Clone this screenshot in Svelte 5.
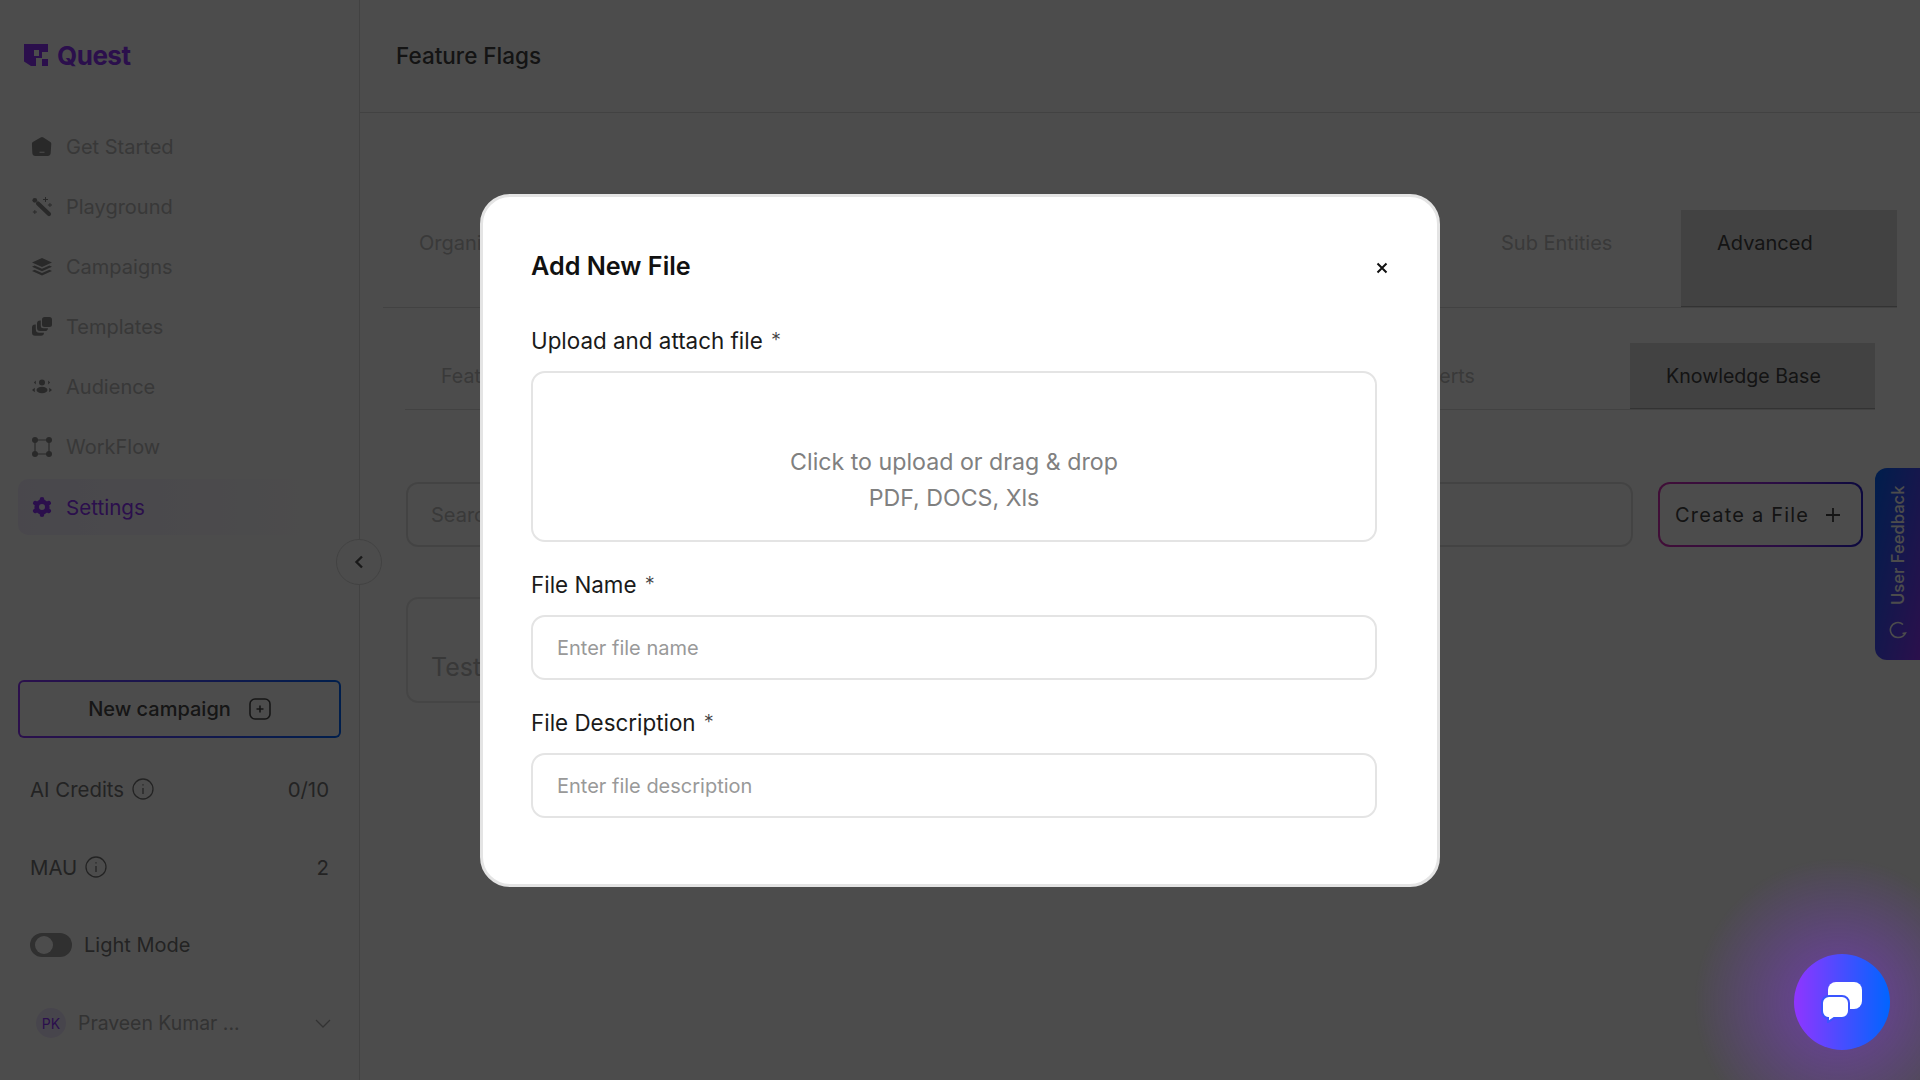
<script>
	// sidebar entries, icon is picked by name in the markup
	const navItems = [
		{ label: 'Get Started', icon: 'start' },
		{ label: 'Playground', icon: 'wand' },
		{ label: 'Campaigns', icon: 'layers' },
		{ label: 'Templates', icon: 'copies' },
		{ label: 'Audience', icon: 'people' },
		{ label: 'WorkFlow', icon: 'flow' },
		{ label: 'Settings', icon: 'gear', active: true }
	];
	const stats = [
		{ label: 'AI Credits', value: '0/10' },
		{ label: 'MAU', value: '2' }
	];
	const lobes = [0, 60, 120, 180, 240, 300];
</script>

<div class="page">
	<aside class="sidebar">
		<div class="logo">
			<svg width="24" height="22" viewBox="0 0 24 22" fill="#9035ff">
				<path d="M0 0H24V8H18V14H12V22H7L0 17.5Z M10 6V12H15V6Z" fill-rule="evenodd" />
				<rect x="18" y="15" width="6" height="7" />
			</svg>
			<span>Quest</span>
		</div>

		<nav class="nav">
			{#each navItems as item}
				<div class="nav-item" class:active={item.active}>
					<svg class="nav-icon" width="20" height="20" viewBox="0 0 20 20" fill="currentColor">
						{#if item.icon === 'start'}
							<path d="M8.6 0.5a2.4 2.4 0 0 1 2.8 0l7 4.6a2 2 0 0 1 .9 1.6l-.6 9.3c-.1 1.7-1.3 3-3 3H3.3c-1.7 0-2.9-1.3-3-3L-.1 6.700a2 2 0 0 1 .9-1.6Z M7.500 14.800v1h5v-1Z" fill-rule="evenodd" />
						{:else if item.icon === 'wand'}
							<path d="M6 6.500 17 17" stroke="currentColor" stroke-width="4.200" stroke-linecap="round" />
							<circle cx="2.800" cy="3.300" r="2.400" />
							<path d="M13 0h1v2h2v1h-2v2h-1V3h-2V2h2Z M17.500 6h.9v1.600h1.600v.9h-1.600v1.600h-.9V8.500h-1.600v-.9h1.600Z M2.400 13h.9v1.600h1.600v.9H3.300v1.600h-.9v-1.600H.8v-.9h1.600Z" />
						{:else if item.icon === 'layers'}
							<path d="M10 1 20 5.500 10 10 0 5.500Z" />
							<path d="M2.600 8.500 10 11.800l7.400-3.300L20 9.700 10 14.200 0 9.700Z" />
							<path d="M2.600 12.700 10 16l7.400-3.300L20 13.900 10 18.500 0 13.900Z" />
						{:else if item.icon === 'copies'}
							<rect x="10" y="0" width="10" height="10" rx="2.500" />
							<path d="M8 3.500h.8v5.200a2.500 2.500 0 0 0 2.500 2.500H16a3 3 0 0 1-3 2.800H8a3 3 0 0 1-3-3V6.500a3 3 0 0 1 3-3Z" />
							<path d="M3 7.500h.8v4.700A3.500 3.500 0 0 0 7.300 15.700H12a3 3 0 0 1-3 3H3a3 3 0 0 1-3-3v-5.200a3 3 0 0 1 3-3Z" />
						{:else if item.icon === 'people'}
							<circle cx="10" cy="5.500" r="3" />
							<ellipse cx="10" cy="13" rx="5.500" ry="3.200" />
							<path d="M3.800 3.400 1.900 5.500l1.900 2.100Z M16.200 3.400l1.900 2.100-1.900 2.100Z M2.800 10.800 0 13l2.800 2.200Z M17.200 10.800 20 13l-2.800 2.200Z" />
						{:else if item.icon === 'flow'}
							<path d="M3 3H17V17H3Z" fill="none" stroke="currentColor" stroke-width="1.200" />
							<circle cx="3" cy="3" r="3" />
							<circle cx="17" cy="3" r="3" />
							<circle cx="3" cy="17" r="3" />
							<circle cx="17" cy="17" r="3" />
						{:else}
							<circle cx="10" cy="10" r="5.300" fill="none" stroke="currentColor" stroke-width="4.600" />
							{#each lobes as deg}
								<circle cx="10" cy="2.200" r="2.300" transform="rotate({deg} 10 10)" />
							{/each}
						{/if}
					</svg>
					<span>{item.label}</span>
				</div>
			{/each}
		</nav>

		<div class="bottom">
			<button class="new-campaign" type="button">
				<span>New campaign</span>
				<svg width="22" height="22" viewBox="0 0 22 22" fill="none" stroke="currentColor" stroke-width="1.600">
					<rect x="1" y="1" width="20" height="20" rx="5" />
					<path d="M11 7.500v7M7.500 11h7" />
				</svg>
			</button>

			{#each stats as stat}
				<div class="stat">
					<span>{stat.label}</span>
					<svg class="info" width="22" height="22" viewBox="0 0 22 22" fill="none" stroke="currentColor" stroke-width="1.300">
						<circle cx="11" cy="11" r="10" />
						<path d="M11 10v6M11 6.200v1.400" />
					</svg>
					<span class="value">{stat.value}</span>
				</div>
			{/each}

			<div class="stat">
				<span class="toggle"><span class="knob"></span></span>
				<span class="mode">Light Mode</span>
			</div>

			<div class="user">
				<span class="avatar">PK</span>
				<span class="user-name">Praveen Kumar ...</span>
				<svg width="16" height="9" viewBox="0 0 16 9" fill="none" stroke="currentColor" stroke-width="1.300">
					<path d="M1 1l7 7 7-7" />
				</svg>
			</div>
		</div>

		<button class="collapse" type="button" aria-label="Collapse">
			<svg width="10" height="14" viewBox="0 0 10 14" fill="none" stroke="#555" stroke-width="2.400">
				<path d="M8 1.500 2.500 7 8 12.500" />
			</svg>
		</button>
	</aside>

	<main class="main">
		<header class="header">Feature Flags</header>

		<div class="tabs">
			<div class="tab">Organization</div>
			<div class="tab-gap"></div>
			<div class="tab">Sub Entities</div>
			<div class="tab current">Advanced</div>
		</div>

		<div class="subtabs">
			<div class="subtab">Feature Flags</div>
			<div class="tab-gap"></div>
			<div class="subtab">Alerts</div>
			<div class="subtab current">Knowledge Base</div>
		</div>

		<div class="toolbar">
			<div class="search">Search</div>
			<button class="create" type="button">
				<span>Create a File</span>
				<svg width="16" height="16" viewBox="0 0 16 16" fill="none" stroke="currentColor" stroke-width="1.800">
					<path d="M8 1v14M1 8h14" />
				</svg>
			</button>
		</div>

		<div class="file-card">Test</div>
	</main>
</div>

<div class="feedback">
	<svg class="feedback-icon" width="18" height="18" viewBox="0 0 18 18" fill="none" stroke="currentColor" stroke-width="1.600">
		<path d="M14 3.500a7.500 7.500 0 1 0-5 13c2.500 0 6-1 7.500-4.500l-3 .5" />
	</svg>
	<span>User Feedback</span>
</div>

<div class="backdrop">
	<section class="modal">
		<div class="modal-head">
			<h2>Add New File</h2>
			<svg class="close" width="12" height="12" viewBox="0 0 12 12" fill="none" stroke="#111" stroke-width="2">
				<path d="M1.500 1.500l9 9M10.500 1.500l-9 9" />
			</svg>
		</div>

		<div class="field-label upload-label">Upload and attach file <span class="star">*</span></div>
		<div class="dropzone">
			<span>Click to upload or drag &amp; drop</span>
			<span>PDF, DOCS, Xls</span>
		</div>

		<div class="field-label">File Name <span class="star">*</span></div>
		<input class="text-input" type="text" placeholder="Enter file name" />

		<div class="field-label">File Description <span class="star">*</span></div>
		<input class="text-input" type="text" placeholder="Enter file description" />
	</section>
</div>

<div class="chat-glow"></div>
<button class="chat" type="button" aria-label="Open chat">
	<svg width="42" height="42" viewBox="0 0 42 42" fill="#fff">
		<rect x="7" y="1" width="34" height="27" rx="8" />
		<path d="M8 15h13a7 7 0 0 1 7 7v8a7 7 0 0 1-7 7H13l-6 4v-4a6 7 0 0 1-6-7v-8a7 7 0 0 1 7-7Z" stroke="#3a55ff" stroke-width="2" />
	</svg>
</button>

<style>
	:global(body) {
		margin: 0;
		background: #fff;
	}

	.page {
		display: flex;
		width: 1920px;
		height: 1080px;
		overflow: hidden;
		font-family: 'Inter', 'Noto Sans', sans-serif;
		color: #444;
	}

	.sidebar {
		position: relative;
		box-sizing: border-box;
		flex: 0 0 360px;
		display: flex;
		flex-direction: column;
		border-right: 1px solid #dcdcdc;
		padding: 43px 18px 18px;
	}

	.logo {
		display: flex;
		align-items: center;
		gap: 9px;
		height: 24px;
		margin-left: 6px;
		color: #9035ff;
		font-size: 26px;
		font-weight: 700;
		letter-spacing: -0.5px;
	}

	.nav {
		display: flex;
		flex-direction: column;
		gap: 4px;
		margin-top: 52px;
	}

	.nav-item {
		display: flex;
		align-items: center;
		gap: 14px;
		height: 56px;
		padding-left: 14px;
		border-radius: 10px;
		color: #bcbcbc;
		font-size: 20px;
	}

	.nav-icon {
		color: #8a8a8a;
		overflow: visible;
	}

	.nav-item.active {
		color: #9035ff;
		font-size: 20.600px;
		background: linear-gradient(90deg, #f4effd, #fff);
	}

	.nav-item.active .nav-icon {
		color: #9035ff;
	}

	.bottom {
		margin-top: auto;
	}

	.new-campaign {
		display: flex;
		align-items: center;
		justify-content: center;
		gap: 18px;
		box-sizing: border-box;
		width: 323px;
		height: 58px;
		margin-bottom: 12px;
		border: 2px solid transparent;
		border-radius: 6px;
		background:
			linear-gradient(#fff, #fff) padding-box,
			linear-gradient(90deg, #9035ff, #0065ff) border-box;
		color: #4a4a4a;
		font-family: inherit;
		font-size: 20px;
		font-weight: 500;
	}

	.stat {
		display: flex;
		align-items: center;
		gap: 8px;
		height: 78px;
		padding: 0 12px;
		color: #777;
		font-size: 20.400px;
	}

	.value {
		margin-left: auto;
	}

	.toggle {
		display: flex;
		align-items: center;
		box-sizing: border-box;
		width: 42px;
		height: 24px;
		margin-right: 4px;
		padding-left: 5px;
		border-radius: 12px;
		background: #a0a0a0;
	}

	.knob {
		width: 18px;
		height: 18px;
		border-radius: 50%;
		background: #fff;
	}

	.mode {
		color: #777;
		font-size: 20px;
	}

	.user {
		display: flex;
		align-items: center;
		height: 78px;
		padding: 0 10px 0 18px;
		color: #aaa;
		font-size: 19.400px;
	}

	.avatar {
		display: flex;
		align-items: center;
		justify-content: center;
		width: 30px;
		height: 30px;
		border-radius: 50%;
		background: #efe6ff;
		color: #9035ff;
		font-size: 14px;
	}

	.user-name {
		margin-left: 12px;
		margin-right: auto;
	}

	.collapse {
		position: absolute;
		top: 539px;
		right: -23px;
		display: flex;
		align-items: center;
		justify-content: center;
		width: 46px;
		height: 46px;
		border: 1px solid #dcdcdc;
		border-radius: 50%;
		background: #fff;
	}

	.main {
		flex: 1;
		display: flex;
		flex-direction: column;
		min-width: 0;
	}

	.header {
		box-sizing: border-box;
		height: 113px;
		padding: 0 36px 2px;
		display: flex;
		align-items: center;
		border-bottom: 1px solid #dcdcdc;
		font-size: 22.500px;
		font-weight: 500;
	}

	.tabs {
		display: flex;
		height: 97px;
		margin: 97px 23px 0;
		border-bottom: 1px solid #dcdcdc;
		font-size: 20px;
		color: #c0c0c0;
	}

	.tab {
		box-sizing: border-box;
		width: 216px;
		padding: 21px 36px;
	}

	.tab-gap {
		flex: 1;
	}

	.tab.current {
		background: #dcdcdc;
		color: #444;
		border-bottom: 1px solid #aaa;
	}

	.subtabs {
		display: flex;
		height: 66px;
		margin: 35px 45px 0;
		border-bottom: 1px solid #dcdcdc;
		font-size: 19.600px;
		color: #c0c0c0;
	}

	.subtab {
		display: flex;
		align-items: center;
		box-sizing: border-box;
		width: 245px;
		padding: 0 36px;
		white-space: nowrap;
	}

	.subtab.current {
		background: #dcdcdc;
		color: #444;
		border-bottom: 1px solid #aaa;
	}

	.toolbar {
		display: flex;
		gap: 25px;
		height: 65px;
		margin: 72px 57px 0 46px;
	}

	.search {
		flex: 1;
		display: flex;
		align-items: center;
		padding-left: 23px;
		border: 2px solid #e2e2e2;
		border-radius: 12px;
		color: #c0c0c0;
		font-size: 20px;
	}

	.create {
		display: flex;
		align-items: center;
		justify-content: flex-start;
		gap: 16px;
		box-sizing: border-box;
		width: 205px;
		padding-left: 15px;
		border: 2px solid transparent;
		border-radius: 12px;
		background:
			linear-gradient(#fff, #fff) padding-box,
			linear-gradient(90deg, #d92fb8, #8a2be2 60%, #2a1fd0) border-box;
		color: #444;
		font-family: inherit;
		font-size: 20px;
		letter-spacing: 1.2px;
	}

	.file-card {
		display: flex;
		align-items: center;
		box-sizing: border-box;
		width: 900px;
		height: 106px;
		margin: 50px 0 0 46px;
		padding: 34px 0 0 23px;
		border: 2px solid #e8e8e8;
		border-radius: 12px;
		color: #bbb;
		font-size: 25px;
	}

	.feedback {
		position: fixed;
		top: 468px;
		right: 0;
		display: flex;
		align-items: center;
		gap: 16px;
		box-sizing: border-box;
		width: 192px;
		height: 45px;
		padding-left: 21px;
		border-radius: 12px 12px 0 0;
		transform-origin: top right;
		transform: translateX(-45px) rotate(-90deg);
		background: linear-gradient(to top right, #9035ff, #0065ff);
		color: #fff;
		font-family: 'Inter', 'Noto Sans', sans-serif;
		font-size: 16.600px;
		font-weight: 500;
		white-space: nowrap;
	}

	.feedback-icon {
		transform: rotate(90deg);
	}

	.backdrop {
		position: fixed;
		inset: 0;
		display: flex;
		align-items: center;
		justify-content: center;
		background: rgba(0, 0, 0, 0.7);
		font-family: 'Inter', 'Noto Sans', sans-serif;
	}

	.modal {
		box-sizing: border-box;
		width: 960px;
		height: 693px;
		margin-top: 1px;
		padding: 51px 48px 0;
		border: 3px solid #e4e4e4;
		border-radius: 30px;
		background: #fff;
		color: #1a1a1a;
	}

	.modal-head {
		display: flex;
		align-items: center;
		justify-content: space-between;
		height: 36px;
		padding-right: 1px;
	}

	.modal-head h2 {
		margin: 0;
		font-size: 25.200px;
		font-weight: 600;
		color: #111;
	}

	.close {
		margin-top: 4px;
	}

	.field-label {
		display: flex;
		align-items: center;
		height: 30px;
		margin: 27px 0 16px;
		font-size: 22.400px;
		white-space: pre;
	}

	.upload-label {
		margin-top: 41px;
	}

	.star {
		margin-left: 2px;
		font-size: 20px;
		font-weight: 300;
		color: #444;
	}

	.dropzone {
		display: flex;
		flex-direction: column;
		align-items: center;
		box-sizing: border-box;
		width: 846px;
		height: 171px;
		padding-top: 71px;
		border: 2px solid #e4e4e4;
		border-radius: 14px;
		color: #808080;
		font-size: 23.200px;
		line-height: 36px;
	}

	.text-input {
		display: block;
		box-sizing: border-box;
		width: 846px;
		height: 65px;
		padding: 0 24px;
		border: 2px solid #e4e4e4;
		border-radius: 14px;
		font-family: inherit;
		font-size: 20px;
	}

	.text-input::placeholder {
		color: #999;
		opacity: 1;
	}

	.chat-glow {
		position: fixed;
		right: -62px;
		bottom: -66px;
		width: 288px;
		height: 288px;
		border-radius: 50%;
		background: radial-gradient(circle closest-side, rgba(144, 53, 255, 0.34) 30%, rgba(144, 53, 255, 0) 100%);
		pointer-events: none;
	}

	.chat {
		position: fixed;
		right: 30px;
		bottom: 30px;
		display: flex;
		align-items: center;
		justify-content: center;
		width: 96px;
		height: 96px;
		padding: 0;
		border: none;
		border-radius: 50%;
		background: linear-gradient(90deg, #9035ff, #0065ff);
	}
</style>
